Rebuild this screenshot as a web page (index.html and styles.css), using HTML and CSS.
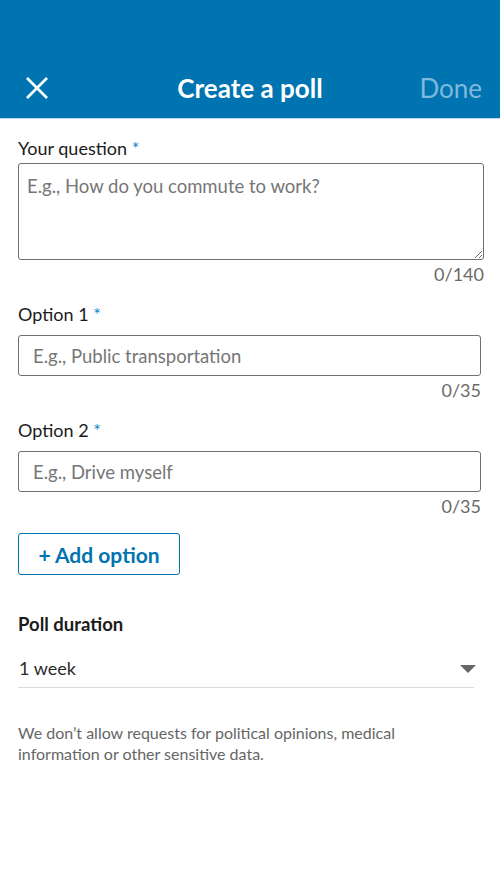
FILE: index.html
```html
<!DOCTYPE html>
<html lang="en">
<head>
<meta charset="utf-8">
<title>Create a poll</title>
<link rel="stylesheet" href="styles.css">
</head>
<body>
<header class="topbar">
  <div class="topbar-row">
    <button class="close-btn" aria-label="Close">
      <svg width="22" height="22" viewBox="0 0 22 22"><path d="M1 1 L21 21 M21 1 L1 21" stroke="#fff" stroke-width="2.6" stroke-linecap="butt" fill="none"/></svg>
    </button>
    <h1 class="title">Create a poll</h1>
    <span class="done">Done</span>
  </div>
</header>
<main class="content">
  <section class="field field-question">
    <label class="field-label">Your question <span class="req">*</span></label>
    <textarea class="textarea" placeholder="E.g., How do you commute to work?"></textarea>
    <div class="counter">0/140</div>
  </section>
  <section class="field field-option">
    <label class="field-label">Option 1 <span class="req">*</span></label>
    <input class="input" type="text" placeholder="E.g., Public transportation">
    <div class="counter">0/35</div>
  </section>
  <section class="field field-option">
    <label class="field-label">Option 2 <span class="req">*</span></label>
    <input class="input" type="text" placeholder="E.g., Drive myself">
    <div class="counter">0/35</div>
  </section>
  <button class="add-btn">+ Add option</button>
  <section class="duration">
    <div class="duration-label">Poll duration</div>
    <div class="select">
      <span class="select-value">1 week</span>
      <svg class="caret" width="16" height="8" viewBox="0 0 16 8"><path d="M0 0 H16 L8 8 Z" fill="#666"/></svg>
    </div>
  </section>
  <p class="disclaimer">We don’t allow requests for political opinions, medical information or other sensitive data.</p>
</main>
</body>
</html>
```

FILE: styles.css
```css
* { box-sizing: border-box; }
html, body { margin: 0; padding: 0; background: #fff; }
body { font-family: Lato, "Open Sans", "Liberation Sans", sans-serif; color: #1b1b1b; width: 500px; }

.topbar {
  background: #0073b1;
  height: 119px;
  padding-top: 66px;
  border-bottom: 1px solid #b9d6ea;
}
.topbar-row {
  display: grid;
  grid-template-columns: 1fr auto 1fr;
  align-items: center;
  height: 44px;
  padding: 0 18px;
}
.close-btn {
  justify-self: start;
  margin-left: 8px;
  background: none;
  border: 0;
  padding: 0;
  width: 22px;
  height: 22px;
  display: flex;
}
.title {
  margin: 0;
  font-size: 26px;
  font-weight: 700;
  color: #fff;
  line-height: 44px;
}
.done {
  justify-self: end;
  font-size: 26px;
  color: #7fb9da;
  line-height: 44px;
}

.content { padding: 17px 0 0 18px; }

.field { display: flex; flex-direction: column; }
.field-question { width: 466px; }
.field-option { width: 463px; margin-top: 17px; }
.field-label {
  font-size: 18px;
  line-height: 24px;
  color: #1b1b1b;
}
.req { color: #0a84c9; font-size: 18px; }

.textarea {
  margin-top: 3px;
  height: 97px;
  border: 1px solid #707070;
  border-radius: 3px;
  padding: 10px 8px;
  font-family: inherit;
  font-size: 18.5px;
  line-height: 24px;
  color: #333;
  resize: vertical;
  outline: none;
}
.input {
  margin-top: 9px;
  height: 41px;
  border: 1px solid #707070;
  border-radius: 3px;
  padding: 0 14px;
  font-family: inherit;
  font-size: 18.5px;
  color: #333;
  outline: none;
}
.textarea::placeholder, .input::placeholder { color: #767676; opacity: 1; }

.counter {
  margin-top: 3px;
  text-align: right;
  font-size: 18px;
  line-height: 22px;
  color: #6a6a6a;
}

.add-btn {
  margin-top: 16px;
  width: 162px;
  height: 42px;
  background: #fff;
  border: 1px solid #0073b1;
  border-radius: 3px;
  color: #0073b1;
  font-family: inherit;
  font-size: 21px;
  font-weight: 700;
  padding: 0;
}

.duration { margin-top: 37px; width: 456px; }
.duration-label {
  font-size: 18.5px;
  font-weight: 700;
  line-height: 24px;
  color: #1b1b1b;
}
.select {
  margin-top: 20px;
  display: flex;
  justify-content: space-between;
  align-items: center;
  padding: 0 0 7px 1px;
  border-bottom: 1px solid #dcdcdc;
}
.select-value { font-size: 18px; line-height: 24px; color: #2b2b2b; }
.caret { margin-right: -2px; margin-top: 2px; }

.disclaimer {
  margin: 34px 0 0;
  max-width: 420px;
  font-size: 16px;
  line-height: 21px;
  color: #666;
}
```
